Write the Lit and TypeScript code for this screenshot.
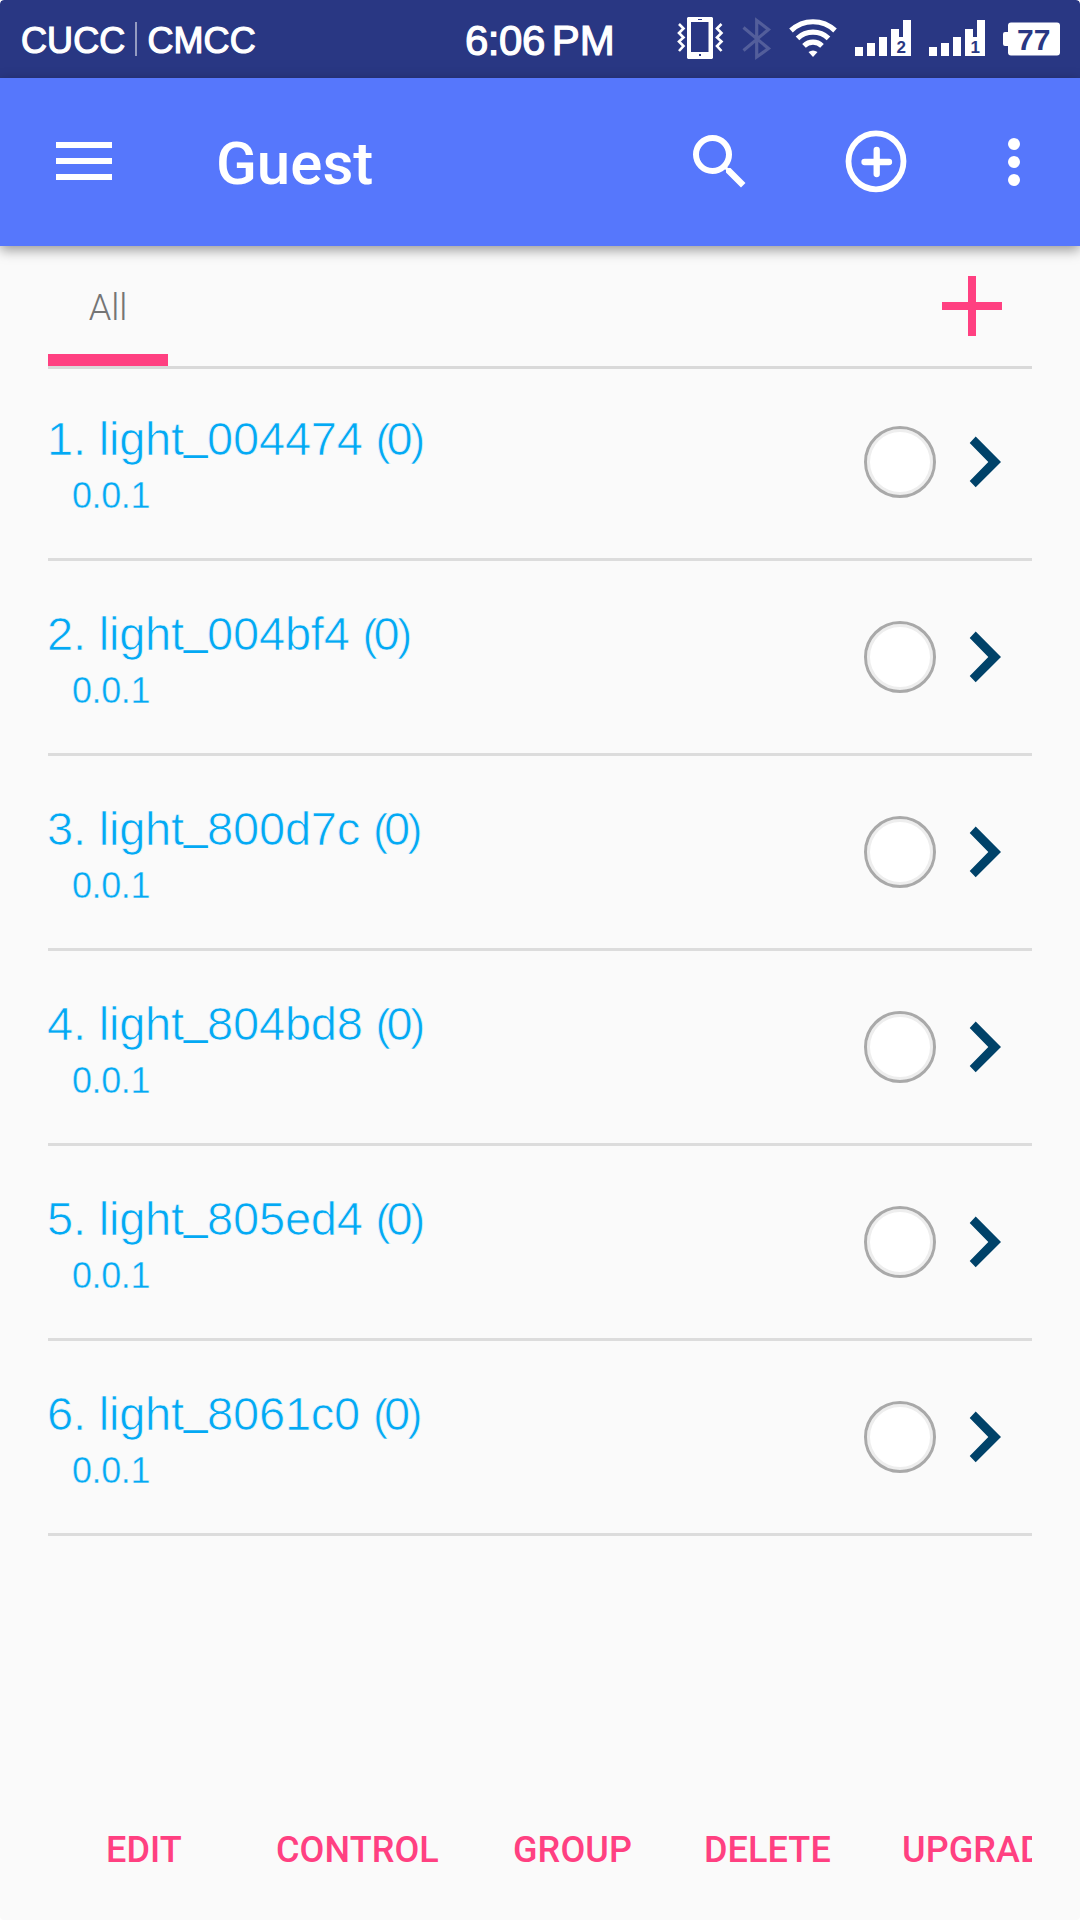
import { LitElement, html, svg, css } from "lit";
import { customElement, property } from "lit/decorators.js";

interface Device {
  id: string;
  count: number;
  version: string;
}

const devices: Device[] = ["004474", "004bf4", "800d7c", "804bd8", "805ed4", "8061c0"].map((id) => ({
  id,
  count: 0,
  version: "0.0.1",
}));

@customElement("status-bar")
class StatusBar extends LitElement {
  static styles = css`
    :host {
      display: grid;
      grid-template-columns: 465px 209px auto;
      height: 78px;
      background: #293783;
      color: #fff;
      border-radius: 4px 4px 0 0;
      font-family: "Liberation Sans", Arial, sans-serif;
      white-space: nowrap;
    }
    .carriers,
    .time {
      display: flex;
      align-items: center;
      padding-top: 3px;
      box-sizing: border-box;
      height: 78px;
      -webkit-text-stroke: 1.2px #fff;
    }
    .carriers {
      padding-left: 21px;
      font-size: 36px;
      letter-spacing: 0.1px;
    }
    .divider {
      width: 2px;
      height: 34px;
      margin: 0 10px 3px 10px;
      background: #949bc1;
    }
    .time {
      font-size: 42px;
      letter-spacing: -0.5px;
    }
    .meridiem {
      margin-left: 7px;
      letter-spacing: 0;
    }
    .icons {
      display: flex;
    }
    svg {
      display: block;
      height: 78px;
      flex: none;
    }
    .digit {
      font: bold 17px "Liberation Sans", sans-serif;
      fill: #293783;
    }
    .charge {
      font: bold 30px "Liberation Sans", sans-serif;
      fill: #293783;
    }
  `;

  private signal(slot: string) {
    return html`<svg width="74" viewBox="846 0 74 78" fill="#fff">
      ${svg`<path d="M855 47h8v9h-8zM867 43h8v13h-8zM879 37h8v19h-8zM891 29h8v8h4V20h8v36h-20z"/>
      <text class="digit" x="896.500" y="53">${slot}</text>`}
    </svg>`;
  }

  render() {
    return html`
      <div class="carriers"><span>CUCC</span><i class="divider"></i><span>CMCC</span></div>
      <div class="time"><span>6:06</span><span class="meridiem">PM</span></div>
      <div class="icons">
        <svg width="62" viewBox="674 0 62 78" fill="none" stroke="#fff" stroke-width="2.6">
          <path fill="#fff" stroke="none" fill-rule="evenodd"
            d="M688 17h24l1 1v40l-1 1h-24l-1-1V18zM691 22v30h17.500V22zM698 19v1h4v-1zM699 54v2h2v-2z" />
          <path d="M679 24l4.500 4.500-4.500 4.500 4.500 4.500-4.500 4 4.500 4.500-4.500 5M721.500 24l-4.500 4.500 4.500 4.500-4.500 4.500 4.500 4-4.500 4.500 4.500 5" />
        </svg>
        <svg width="44" viewBox="736 0 44 78" fill="none" stroke="#535e9b" stroke-width="3.200">
          <path d="M743.500 27.500L768.500 48.500L756.700 57V20.500L768.500 29.500L743.500 50.500" />
        </svg>
        <svg width="66" viewBox="780 0 66 78" fill="none" stroke="#fff" stroke-width="5.200">
          <path d="M791 30.500a32 32 0 0 1 44 0M797.500 38.300a22.500 22.500 0 0 1 31 0M804 45.800a13 13 0 0 1 18 0" />
          <path fill="#fff" stroke="none" d="M808.500 52q4.500-3 9 0L813 57z" />
        </svg>
        ${this.signal("2")}${this.signal("1")}
        <svg width="68" viewBox="994 0 68 78" fill="#fff">
          <path d="M1011 22.500h46q3 0 3 3v27q0 3-3 3h-46q-3 0-3-3V46h-3q-2 0-2-2V34q0-2 2-2h3v-6.500q0-3 3-3z" />
          <text class="charge" x="1017" y="50">77</text>
        </svg>
      </div>
    `;
  }
}

@customElement("tool-bar")
class ToolBar extends LitElement {
  static styles = css`
    :host {
      display: flex;
      position: relative;
      align-items: center;
      height: 168px;
      box-sizing: border-box;
      padding: 0 30px 0 48px;
      background: #5677fc;
      box-shadow: 0 4px 12px rgba(0, 0, 0, 0.4);
      color: #fff;
    }
    svg {
      display: block;
      flex: none;
    }
    .title {
      flex: 1;
      margin: 3px 0 0 96px;
      font: 500 60px/72px Roboto, sans-serif;
    }
    .add {
      margin: 0 66px 0 84px;
    }
  `;

  render() {
    return html`
      <svg width="72" height="72" viewBox="0 0 72 72" fill="#fff">
        <path d="M8 16h56v6H8zM8 32h56v6H8zM8 48h56v6H8z" />
      </svg>
      <div class="title">Guest</div>
      <svg width="72" height="72" viewBox="0 0 24 24" fill="#fff">
        <path d="M15.500 14h-.79l-.28-.27A6.471 6.471 0 0 0 16 9.500 6.500 6.500 0 1 0 9.500 16c1.610 0 3.090-.59 4.230-1.570l.27.28v.79l5 4.990L20.490 19l-4.990-5zm-6 0C7.010 14 5 11.990 5 9.500S7.010 5 9.500 5 14 7.010 14 9.500 11.990 14 9.500 14z" />
      </svg>
      <svg class="add" width="72" height="72" viewBox="840 126 72 72" fill="none" stroke="#fff">
        <ellipse cx="876" cy="161.300" rx="27.500" ry="28" stroke-width="5.800" />
        <path d="M864.500 162h24.500M876.700 150v24" stroke-width="6.300" stroke-linecap="round" />
      </svg>
      <svg width="72" height="72" viewBox="0 0 72 72" fill="#fff">
        <circle cx="36" cy="18" r="6" /><circle cx="36" cy="36" r="6" /><circle cx="36" cy="54" r="6" />
      </svg>
    `;
  }
}

@customElement("device-row")
class DeviceRow extends LitElement {
  @property({ type: Number }) index = 0;
  @property({ attribute: false }) device!: Device;

  static styles = css`
    :host {
      display: flex;
      align-items: center;
      height: 192px;
      border-bottom: 3px solid #dcdcdc;
      color: #03a9f4;
      font-family: "Liberation Sans", Arial, sans-serif;
      white-space: nowrap;
    }
    .text {
      flex: 1;
      align-self: flex-start;
      padding-top: 45px;
    }
    .name {
      margin-left: -1px;
      font-size: 47px;
      line-height: 56px;
      letter-spacing: -0.2px;
      -webkit-text-stroke: 0.7px #fafafa;
    }
    .underscore {
      font-size: 42px;
      line-height: 1;
      vertical-align: 5px;
      -webkit-text-stroke: 0;
    }
    .paren {
      font-size: 45px;
      line-height: 1;
      letter-spacing: -4px;
    }
    .count {
      letter-spacing: -2.5px;
    }
    .version {
      margin-top: 6.5px;
      padding-left: 24px;
      font-size: 36px;
      line-height: 44px;
      letter-spacing: -0.4px;
      -webkit-text-stroke: 0.4px #fafafa;
    }
    .radio {
      box-sizing: border-box;
      width: 72px;
      height: 72px;
      border: 3px solid #a9a9a9;
      border-radius: 50%;
      background: #fff;
      box-shadow: inset 0 0 0 3px #eee;
    }
    svg {
      display: block;
      margin: 0 24px;
    }
  `;

  render() {
    const { id, count, version } = this.device;
    return html`
      <div class="text">
        <div class="name">${this.index}. light<span class="underscore">_</span>${id} <span class="paren">(</span><span class="count">${count}</span><span class="paren">)</span></div>
        <div class="version">${version}</div>
      </div>
      <div class="radio"></div>
      <svg width="48" height="72" viewBox="960 426 48 72" fill="#004269">
        <path d="M975.700 436.500L1001 462L975.700 487.300L969.700 481L988.300 462L969.700 443z" />
      </svg>
    `;
  }
}

@customElement("app-root")
class AppRoot extends LitElement {
  static styles = css`
    :host {
      display: block;
      background: #fff;
    }
    .screen {
      display: flex;
      flex-direction: column;
      height: 1920px;
      overflow: hidden;
      background: #fafafa;
      border-radius: 4px;
      font-family: Roboto, sans-serif;
    }
    .tabs {
      display: flex;
      justify-content: space-between;
      height: 120px;
      margin: 0 48px;
      border-bottom: 3px solid #d9d9d9;
    }
    .tab {
      box-sizing: border-box;
      width: 120px;
      height: 120px;
      padding-top: 2px;
      border-bottom: 12px solid #ff4081;
      color: #757575;
      font-size: 36px;
      font-weight: 300;
      line-height: 120px;
      text-align: center;
    }
    .plus {
      display: block;
      margin: 30px 30px 0 0;
    }
    .list {
      flex: 1;
      margin: -3px 48px 0;
    }
    .actions {
      display: grid;
      grid-template-columns: 170px 237px 191px 198px 200px;
      height: 144px;
      margin: 0 48px;
      padding-left: 58px;
      overflow: hidden;
      color: #ff4081;
      font-size: 36px;
      font-weight: 500;
      letter-spacing: 0.1px;
      line-height: 148px;
      white-space: nowrap;
    }
  `;

  render() {
    return html`
      <div class="screen">
        <status-bar></status-bar>
        <tool-bar></tool-bar>
        <div class="tabs">
          <div class="tab">All</div>
          <svg class="plus" width="60" height="60" viewBox="0 0 60 60" fill="#ff4081">
            <path d="M26 0h8v26h26v8H34v26h-8V34H0v-8h26z" />
          </svg>
        </div>
        <div class="list">
          ${devices.map((d, i) => html`<device-row .index=${i + 1} .device=${d}></device-row>`)}
        </div>
        <div class="actions">
          ${["EDIT", "CONTROL", "GROUP", "DELETE", "UPGRADE"].map((a) => html`<span>${a}</span>`)}
        </div>
      </div>
    `;
  }
}
